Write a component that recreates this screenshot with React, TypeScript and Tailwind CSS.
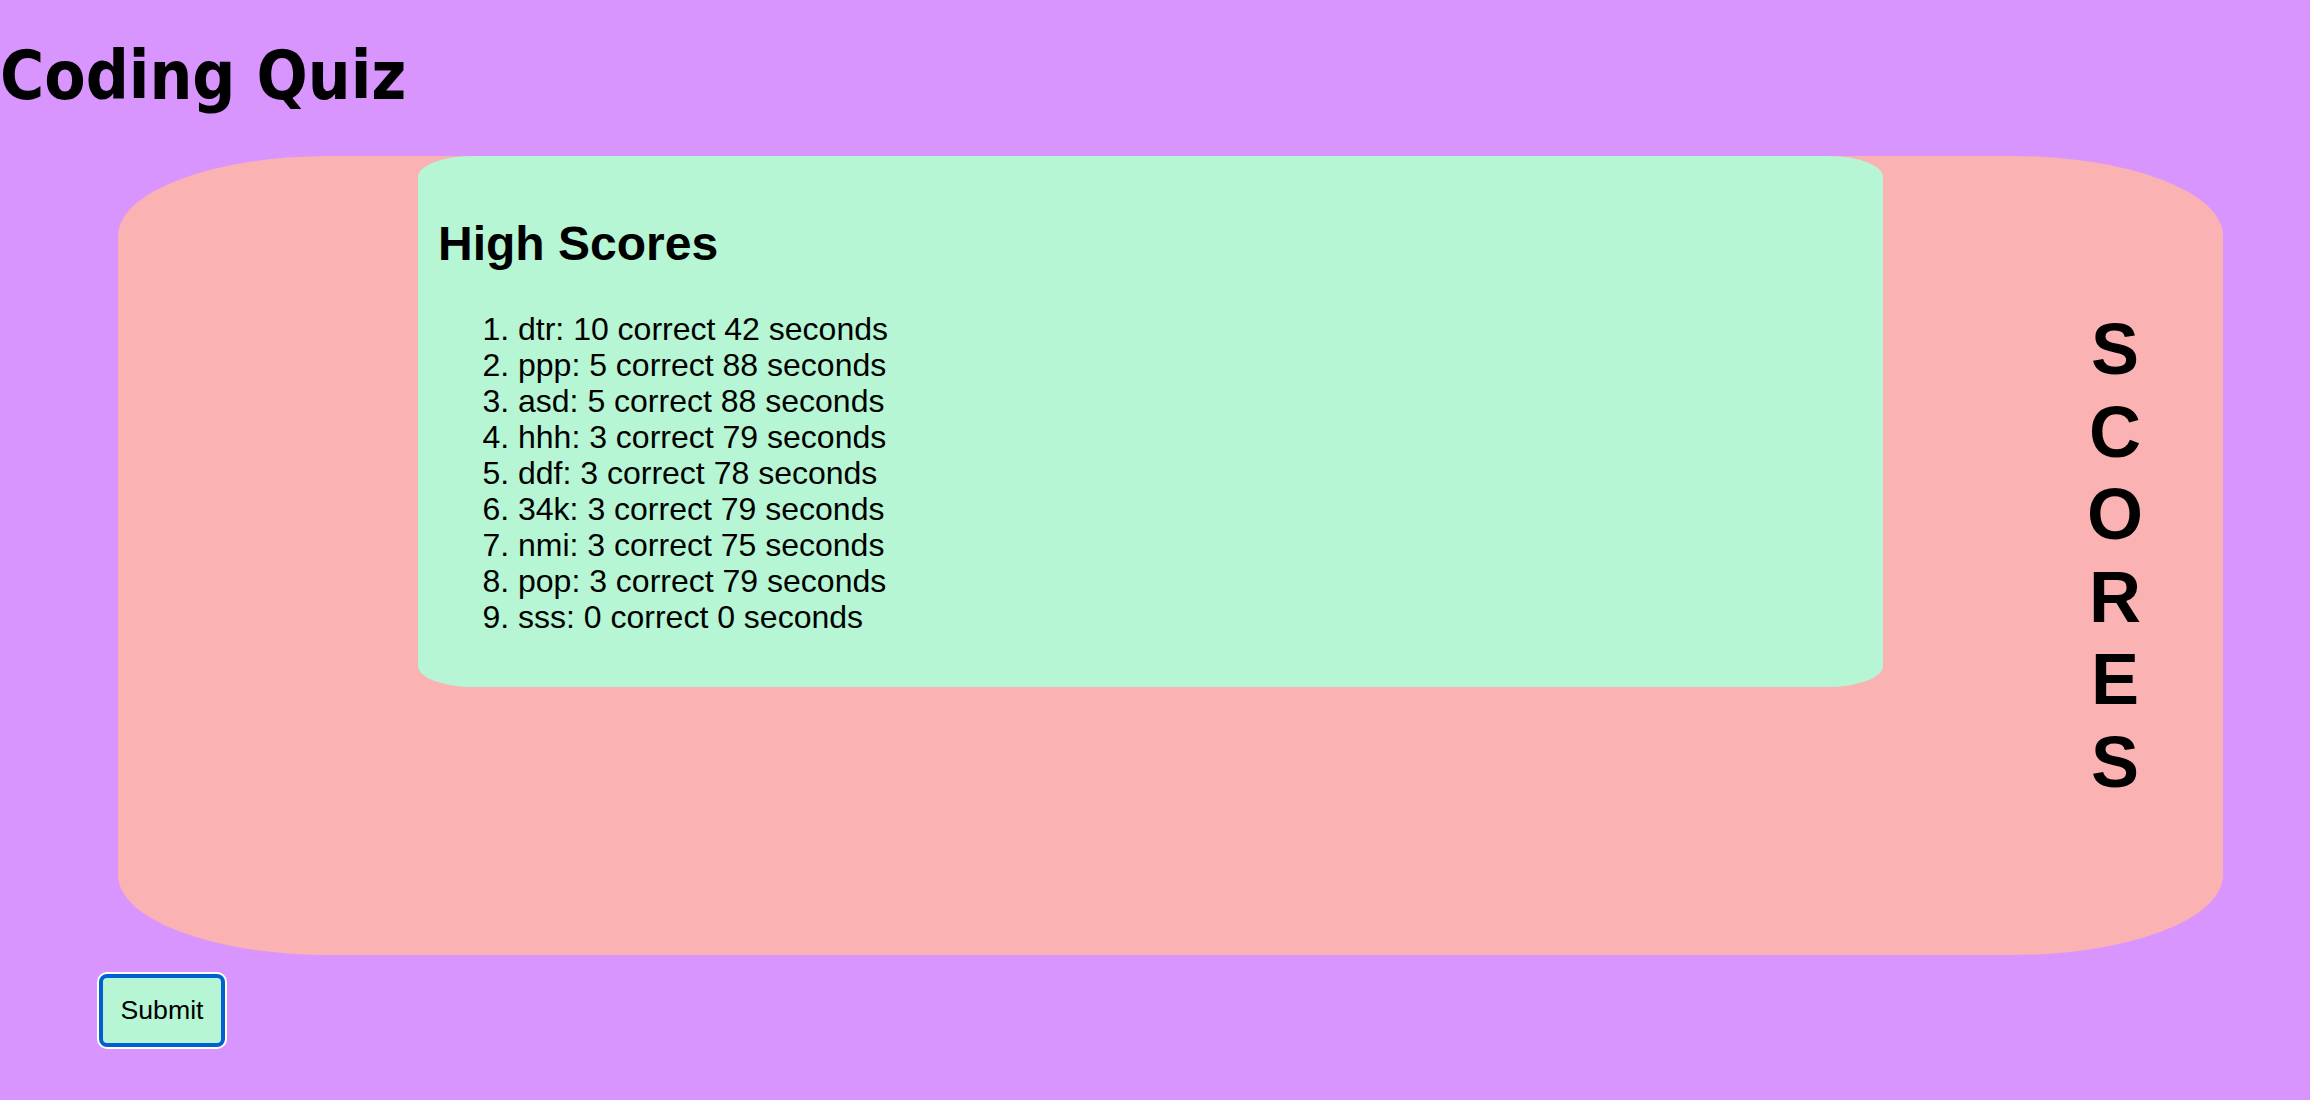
import React from 'react';

const scores = [
  { name: 'dtr', correct: 10, seconds: 42 },
  { name: 'ppp', correct: 5, seconds: 88 },
  { name: 'asd', correct: 5, seconds: 88 },
  { name: 'hhh', correct: 3, seconds: 79 },
  { name: 'ddf', correct: 3, seconds: 78 },
  { name: '34k', correct: 3, seconds: 79 },
  { name: 'nmi', correct: 3, seconds: 75 },
  { name: 'pop', correct: 3, seconds: 79 },
  { name: 'sss', correct: 0, seconds: 0 },
];

const App: React.FC = () => {
  return (
    <div className="min-h-screen bg-[#d895fe] pt-[36px] text-black font-['Liberation_Sans',Arial,sans-serif]">
      {/* Title */}
      <h1 className="mb-[40px] text-[67px] leading-[80px] font-bold [font-stretch:condensed] font-['DejaVu_Sans_Condensed','DejaVu_Sans',sans-serif]">
        Coding Quiz
      </h1>

      {/* Scores panel */}
      <div className="ml-[118px] flex h-[799px] w-[2105px] items-start rounded-[10%] bg-[#fbb2b2]">
        <div className="ml-[300px] w-[1465px] rounded-[55px/21px] bg-[#b6f6d4] px-[20px] pt-[20px] pb-[20px]">
          <h2 className="my-[40px] text-[48px] leading-[55px] font-bold">High Scores</h2>
          <ol className="mb-[32px] list-decimal pl-[80px] text-[32px] leading-[36px]">
            {scores.map((s, i) => (
              <li key={i}>
                {s.name}: {s.correct} correct {s.seconds} seconds
              </li>
            ))}
          </ol>
        </div>

        <div className="ml-[202px] flex w-[60px] flex-col items-center self-center text-[72px] leading-[82.5px] font-bold">
          {'SCORES'.split('').map((ch, i) => (
            <span key={i}>{ch}</span>
          ))}
        </div>
      </div>

      {/* Submit */}
      <button className="ml-[99px] mt-[19px] h-[73px] w-[126px] rounded-[8px] border-4 border-[#0060d0] bg-[#b6f6d4] text-[26.7px] ring-2 ring-white">
        Submit
      </button>
    </div>
  );
};

export default App;
